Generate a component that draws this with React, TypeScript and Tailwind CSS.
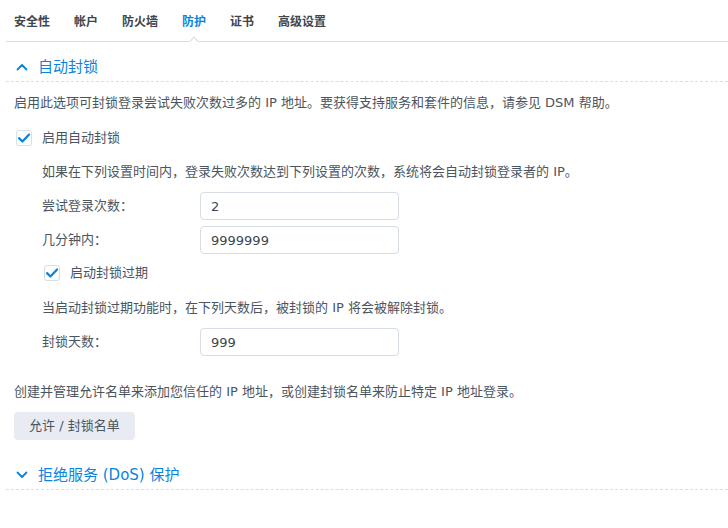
import React from "react";

const TABS = ["安全性", "帐户", "防火墙", "防护", "证书", "高级设置"];
const ACTIVE_TAB = "防护";

const Chevron = ({ up }: { up?: boolean }) => (
  <svg viewBox="0 0 12 8" className="h-2 w-3" fill="none">
    <path
      d={up ? "M1.5 6.5L6 2l4.5 4.5" : "M1.5 1.5L6 6l4.5-4.5"}
      stroke="#0a84e0"
      strokeWidth="1.8"
      strokeLinecap="round"
      strokeLinejoin="round"
    />
  </svg>
);

const CheckBox = ({ className = "" }: { className?: string }) => (
  <span
    className={`flex h-4 w-4 shrink-0 items-center justify-center rounded-[3px] border border-[#d8dee5] bg-white ${className}`}
  >
    <svg viewBox="0 0 16 16" className="h-[14px] w-[14px]" fill="none">
      <path
        d="M2.3 8.2L6.2 12L13.8 4"
        stroke="#0a84e0"
        strokeWidth="2.6"
        strokeLinecap="round"
        strokeLinejoin="round"
      />
    </svg>
  </span>
);

const SectionHeader = ({ title, open }: { title: string; open?: boolean }) => (
  <div className="flex items-center border-b border-dashed border-[#d9dee4] pt-[15px] pb-[4px] pl-[8px]">
    <span className="flex w-[24px] items-center pl-[2px]">
      <Chevron up={open} />
    </span>
    <span className="text-[15px] leading-5 text-[#0a84e0]">{title}</span>
  </div>
);

const Field = ({ label, value }: { label: string; value: string }) => (
  <div className="flex items-center">
    <span className="w-[158px] leading-5">{label}</span>
    <input
      readOnly
      value={value}
      className="h-7 w-[199px] rounded-[4px] border border-[#d5dce4] bg-white px-[10px] text-[13px] text-[#3c4650] outline-none"
    />
  </div>
);

export default function App() {
  return (
    <div
      className="min-h-[528px] w-full bg-white pl-[6px] text-[13px] text-[#4b5560]"
      style={{ fontFamily: '"DejaVu Sans", "Noto Sans CJK SC", sans-serif' }}
    >
      {/* tab strip */}
      <div className="flex h-[42px] items-center gap-[24px] border-b border-[#d6dde5] pl-[8px] pt-[3px]">
        {TABS.map((tab) => (
          <div key={tab} className="relative flex h-full items-center">
            <span
              className={`text-[12px] font-semibold ${
                tab === ACTIVE_TAB ? "text-[#0a84e0]" : "text-[#3f464d]"
              }`}
            >
              {tab}
            </span>
            {tab === ACTIVE_TAB && (
              <span className="absolute -bottom-[4px] left-1/2 h-[7px] w-[7px] -translate-x-1/2 rotate-45 border-l border-t border-[#d6dde5] bg-white" />
            )}
          </div>
        ))}
      </div>

      <SectionHeader title="自动封锁" open />

      <div className="pl-[8px]">
        <p className="mt-[11px] leading-5">
          启用此选项可封锁登录尝试失败次数过多的 IP 地址。要获得支持服务和套件的信息，请参见 DSM 帮助。
        </p>

        <label className="mt-[15px] flex items-center gap-[10px] pl-[2px]">
          <CheckBox />
          <span className="leading-5">启用自动封锁</span>
        </label>

        <div className="pl-[28px]">
          <p className="mt-[14px] leading-5">
            如果在下列设置时间内，登录失败次数达到下列设置的次数，系统将会自动封锁登录者的 IP。
          </p>

          <div className="mt-[10px] flex flex-col gap-[6px]">
            <Field label="尝试登录次数：" value="2" />
            <Field label="几分钟内：" value="9999999" />
          </div>

          <label className="mt-[9px] flex items-center gap-[10px] pl-[2px]">
            <CheckBox />
            <span className="leading-5">启动封锁过期</span>
          </label>

          <p className="mt-[15px] leading-5">
            当启动封锁过期功能时，在下列天数后，被封锁的 IP 将会被解除封锁。
          </p>

          <div className="mt-[10px]">
            <Field label="封锁天数：" value="999" />
          </div>
        </div>

        <p className="mt-[26px] leading-5">
          创建并管理允许名单来添加您信任的 IP 地址，或创建封锁名单来防止特定 IP 地址登录。
        </p>

        <button className="mt-[10px] h-7 rounded-[4px] bg-[#e8ecf2] px-[15px] text-[13px] text-[#4b5560]">
          允许 / 封锁名单
        </button>
      </div>

      <div className="mt-[10px]">
        <SectionHeader title="拒绝服务 (DoS) 保护" />
      </div>
    </div>
  );
}
